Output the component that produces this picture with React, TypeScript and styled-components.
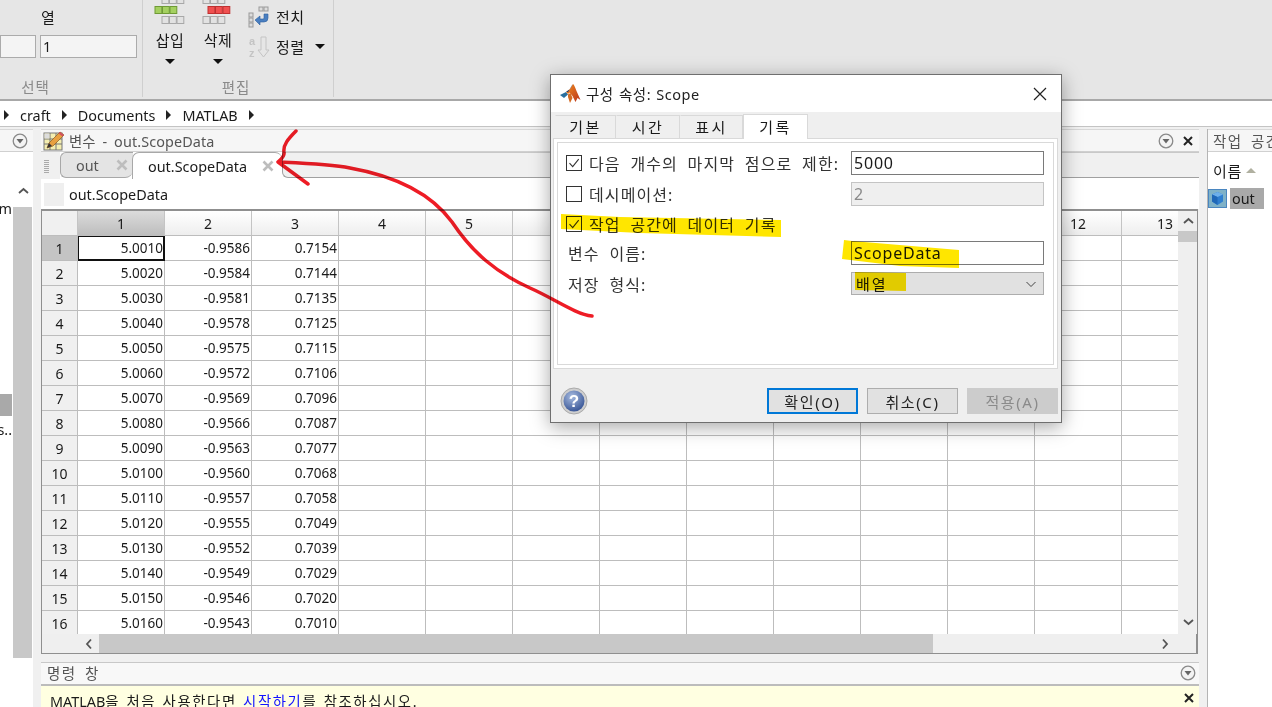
import React from 'react'
import styled, { createGlobalStyle } from 'styled-components'

const FONT = `"Noto Sans", "Noto Sans CJK KR", sans-serif`

const GlobalStyle = createGlobalStyle`
  html, body {
    margin: 0;
    padding: 0;
    background: #f0f0f0;
    font-family: ${FONT};
    font-size: 14.4px;
    color: #1a1a1a;
  }
  * { box-sizing: border-box; }
`

const Page = styled.div`
  position: relative;
  width: 1272px;
  height: 707px;
  overflow: hidden;
  display: flex;
  flex-direction: column;
  background: #f0f0f0;
`

/* ribbon */
const Ribbon = styled.div`
  height: 101px;
  flex: none;
  display: flex;
  background: #e6e6e6;
  border-bottom: 2px solid #a8a8a8;
`
const RibbonSection = styled.div<{ $w: number }>`
  width: ${p => p.$w}px;
  height: 97px;
  flex: none;
  display: flex;
  flex-direction: column;
  border-right: 1px solid #cfcfcf;
`
const SectionBody = styled.div<{ $pad?: number }>`
  flex: 1;
  display: flex;
  min-height: 0;
  padding-left: ${p => p.$pad ?? 0}px;
`
const SectionLabel = styled.div<{ $right: number }>`
  height: 20px;
  padding-right: ${p => p.$right}px;
  text-align: center;
  color: #8a8a8a;
  font-size: 14.5px;
  letter-spacing: 1px;
  line-height: 20px;
`
const SelectBody = styled.div`
  display: flex;
  flex-direction: column;
`
const ColTitle = styled.div`
  height: 35px;
  padding: 7px 0 0 41px;
  line-height: 20px;
  font-size: 15px;
`
const InputRow = styled.div`
  display: flex;
  gap: 4px;
`
const RibbonInput = styled.div<{ $w: number }>`
  width: ${p => p.$w}px;
  height: 23px;
  background: #f4f4f4;
  border: 1px solid #ababab;
  padding-left: 2px;
  font-size: 14.4px;
  line-height: 21px;
`
const BigButton = styled.div`
  width: 48px;
  display: flex;
  flex-direction: column;
  align-items: center;
`
const BigIcon = styled.div`
  height: 30px;
  align-self: stretch;
`
const BigLabel = styled.div`
  font-size: 15px;
  line-height: 20px;
  letter-spacing: 0.5px;
`
const Caret = styled.span<{ $top?: number; $left?: number }>`
  display: inline-block;
  width: 0;
  height: 0;
  margin-top: ${p => p.$top ?? 0}px;
  margin-left: ${p => p.$left ?? 0}px;
  border-left: 5px solid transparent;
  border-right: 5px solid transparent;
  border-top: 5px solid #111;
`
const SmallCol = styled.div`
  padding: 5px 0 0 6px;
  display: flex;
  flex-direction: column;
  gap: 7px;
`
const SmallRow = styled.div`
  display: flex;
  align-items: center;
  gap: 4px;
  height: 23px;
  font-size: 15px;
  letter-spacing: 0.5px;
`

/* address bar */
const AddressBar = styled.div`
  height: 25px;
  flex: none;
  display: flex;
  align-items: center;
  gap: 11px;
  padding: 3px 0 0 4px;
  background: #fff;
  font-size: 14.4px;
`
const Crumb = styled.span`
  width: 0;
  height: 0;
  border-top: 5px solid transparent;
  border-bottom: 5px solid transparent;
  border-left: 5px solid #222;
`

/* desktop */
const Desktop = styled.div`
  flex: 1;
  min-height: 0;
  display: flex;
  padding-top: 2px;
  border-top: 1px solid #c4c4c4;
`
const LeftPanel = styled.div`
  width: 33px;
  flex: none;
  display: flex;
  flex-direction: column;
`
const PanelHead = styled.div`
  height: 23px;
  flex: none;
  display: flex;
  align-items: center;
  background: #f6f6f6;
  border-top: 1px solid #d8d8d8;
  border-bottom: 1px solid #d0d0d0;
`
const LeftHead = styled(PanelHead)`
  justify-content: flex-end;
  padding-right: 5px;
`
const LeftBody = styled.div`
  flex: 1;
  min-height: 0;
  display: flex;
  background: #fff;
`
const LeftFiles = styled.div`
  position: relative;
  width: 13px;
  flex: none;
  overflow: hidden;
  font-size: 14.4px;
`
const LeftText = styled.div<{ $top: number }>`
  position: absolute;
  right: 1px;
  top: ${p => p.$top}px;
  line-height: 18px;
  white-space: nowrap;
`
const LeftSelected = styled.div`
  position: absolute;
  left: 0;
  right: 1px;
  top: 242px;
  height: 22px;
  background: #a9a9a9;
`
const LeftScroll = styled.div`
  width: 19px;
  flex: none;
  display: flex;
  flex-direction: column;
`
const ScrollBtn = styled.div`
  height: 55px;
  flex: none;
  display: flex;
  align-items: flex-end;
  justify-content: center;
  padding-bottom: 10px;
`
const ScrollThumb = styled.div`
  height: 451px;
  flex: none;
  background: #c8c8c8;
`

const Center = styled.div`
  width: 1158px;
  margin-left: 8px;
  flex: none;
  display: flex;
  flex-direction: column;
  gap: 8px;
`
const VarPanel = styled.div`
  height: 525px;
  flex: none;
  display: flex;
  flex-direction: column;
  overflow: hidden;
`
const VarHead = styled(PanelHead)`
  padding: 0 0 0 2px;
  color: #555;
  font-size: 14.4px;
`
const VarTitle = styled.span`
  margin-left: 4px;
  word-spacing: 3px;
  letter-spacing: 0.1px;
`
const Spacer = styled.div`
  flex: 1;
`
const HeadTool = styled.div`
  width: 22px;
  display: flex;
  align-items: center;
  justify-content: center;
`
const TabBar = styled.div`
  height: 27px;
  flex: none;
  display: flex;
  background: #fff;
`
const GripArea = styled.div`
  width: 19px;
  flex: none;
  display: flex;
  align-items: center;
  padding-left: 3px;
  background: #f0f0f0;
`
const Gripper = styled.div`
  width: 5px;
  height: 14px;
  background: repeating-linear-gradient(0deg, #aaa 0 1px, transparent 1px 2px);
`
const OutTab = styled.div`
  width: 73px;
  height: 26px;
  flex: none;
  display: flex;
  align-items: center;
  justify-content: space-between;
  padding: 0 5px 0 15px;
  color: #555;
  background: #e4e4e4;
  border: 1px solid #a8a8a8;
  border-right: none;
  border-radius: 6px 0 8px 6px;
  font-size: 14.4px;
`
const ActiveTab = styled.div`
  width: 150px;
  flex: none;
  display: flex;
  align-items: center;
  justify-content: space-between;
  padding: 0 8px 0 15px;
  background: #fff;
  border-top: 1px solid #a8a8a8;
  border-left: 1px solid #a8a8a8;
  border-radius: 7px 7px 0 0;
  font-size: 14.4px;
  margin-left: -1px;
`
const TabRest = styled.div`
  flex: 1;
  height: 26px;
  background: #f0f0f0;
  border-top: 1px solid #c8c8c8;
  border-left: 1px solid #a0a0a0;
  border-bottom: 1px solid #a0a0a0;
  border-radius: 0 0 0 6px;
`
const NameBar = styled.div`
  height: 30px;
  flex: none;
  display: flex;
  align-items: center;
  gap: 5px;
  padding: 1px 0 0 3px;
  background: #fff;
  font-size: 14.4px;
`
const NameIcon = styled.div`
  width: 20px;
  height: 23px;
  background: #efefef;
`
const GridFrame = styled.div`
  flex: 1;
  min-height: 0;
  display: flex;
  flex-direction: column;
  border: 2px solid #8f8f8f;
  border-bottom-width: 1px;
  border-left-width: 1px;
  margin-right: 1px;
  background: #efefef;
`
const GridArea = styled.div`
  height: 423px;
  flex: none;
  display: flex;
`
const Sheet = styled.div`
  width: 1136px;
  flex: none;
  overflow: hidden;
  display: grid;
  grid-template-columns: 36px repeat(13, 87px);
  grid-auto-rows: 25px;
  background: #fff;
`
const ColHead = styled.div<{ $selected?: boolean }>`
  display: flex;
  align-items: center;
  justify-content: center;
  font-size: 14px;
  background: ${p => (p.$selected ? 'linear-gradient(#dcdcdc, #bdbdbd)' : 'linear-gradient(#fff, #eeeeee)')};
  border-right: 1px solid #c4c4c4;
  border-bottom: 1px solid #bdbdbd;
`
const Corner = styled.div`
  background: #f0f0f0;
  border-right: 1px solid #c4c4c4;
  border-bottom: 1px solid #bdbdbd;
`
const RowHead = styled.div<{ $selected?: boolean }>`
  display: flex;
  align-items: center;
  justify-content: center;
  font-size: 14px;
  background: ${p => (p.$selected ? '#c4c4c4' : '#f0f0f0')};
  border-right: 1px solid #bdbdbd;
  border-bottom: 1px solid #bdbdbd;
`
const Cell = styled.div<{ $focus?: boolean }>`
  display: flex;
  align-items: center;
  justify-content: flex-end;
  padding-right: 1px;
  font-size: 13.5px;
  border-right: 1px solid #bdbdbd;
  border-bottom: 1px solid #bdbdbd;
  ${p => (p.$focus ? 'box-shadow: inset 0 0 0 1px #111; border-color: #111;' : '')}
`
const VScroll = styled.div`
  width: 19px;
  flex: none;
  display: flex;
  flex-direction: column;
  background: #efefef;
`
const VBtn = styled.div<{ $h: number }>`
  height: ${p => p.$h}px;
  flex: none;
  display: flex;
  align-items: center;
  justify-content: center;
`
const VThumb = styled.div`
  height: 11px;
  flex: none;
  background: #c8c8c8;
`
const HScroll = styled.div`
  flex: 1;
  display: flex;
  align-items: stretch;
  background: #efefef;
  padding-left: 36px;
`
const HBtn = styled.div`
  width: 21px;
  flex: none;
  display: flex;
  align-items: center;
  justify-content: center;
`
const HThumb = styled.div`
  width: 834px;
  flex: none;
  background: #c8c8c8;
`
const HEnd = styled(HBtn)`
  margin-left: auto;
  margin-right: 21px;
`

const CommandWindow = styled.div`
  flex: 1;
  display: flex;
  flex-direction: column;
`
const CommandHead = styled.div`
  height: 24px;
  flex: none;
  display: flex;
  align-items: center;
  padding: 0 0 2px 6px;
  background: #f8f8f8;
  border-top: 1px solid #c8c8c8;
  border-bottom: 2px solid #bcbcbc;
  color: #555;
  font-size: 14.5px;
  letter-spacing: 1.5px;
  word-spacing: 3px;
`
const Notice = styled.div`
  flex: 1;
  display: flex;
  align-items: flex-start;
  justify-content: space-between;
  padding: 4px 0 0 9px;
  background: #ffffe1;
  font-size: 14.4px;
  letter-spacing: 1.6px;
  word-spacing: 1px;
  white-space: nowrap;
`
const ProductName = styled.span`
  letter-spacing: 0;
`
const NoticeLink = styled.span`
  color: #1414ff;
`
const NoticeClose = styled(HeadTool)`
  margin-top: 2px;
  margin-right: -1px;
`

const RightPanel = styled.div`
  width: 65px;
  margin-left: 8px;
  flex: none;
  display: flex;
  flex-direction: column;
  border-left: 1px solid #b4b4b4;
`
const RightHead = styled(PanelHead)`
  padding-left: 5px;
  color: #555;
  white-space: nowrap;
  overflow: hidden;
  font-size: 14.5px;
  letter-spacing: 1.5px;
  word-spacing: 3px;
`
const RightBody = styled.div`
  flex: 1;
  background: #fff;
`
const NameHeader = styled.div`
  height: 35px;
  display: flex;
  align-items: center;
  gap: 4px;
  padding: 2px 0 0 5px;
  font-size: 15px;
  letter-spacing: 0.6px;
`
const UpArrow = styled.span`
  width: 0;
  height: 0;
  border-left: 5px solid transparent;
  border-right: 5px solid transparent;
  border-bottom: 5px solid #b0b0a0;
`
const VarRow = styled.div`
  height: 22px;
  display: flex;
  align-items: center;
  gap: 3px;
`
const VarName = styled.span`
  width: 34px;
  height: 21px;
  padding-left: 2px;
  line-height: 21px;
  background: #a9a9a9;
  font-size: 14.4px;
`

/* dialog */
const Dialog = styled.div`
  position: absolute;
  left: 550px;
  top: 74px;
  width: 512px;
  height: 349px;
  display: flex;
  flex-direction: column;
  background: #efefef;
  border: 1px solid #6f6f6f;
  box-shadow: 0 4px 18px rgba(0, 0, 0, 0.35);
  z-index: 5;
`
const TitleBar = styled.div`
  height: 37px;
  flex: none;
  display: flex;
  align-items: center;
  justify-content: space-between;
  padding: 0 14px 0 9px;
  background: #fff;
`
const TitleText = styled.div`
  display: flex;
  align-items: center;
  gap: 5px;
  font-size: 14.5px;
  color: #222;
  letter-spacing: 0.5px;
  word-spacing: 1px;
`
const DialogTabs = styled.div`
  height: 26px;
  flex: none;
  display: flex;
  align-items: flex-end;
  padding: 3px 0 0 4px;
`
const DialogTab = styled.div<{ $active?: boolean; $w: number }>`
  width: ${p => p.$w}px;
  height: ${p => (p.$active ? 25 : 23)}px;
  margin-bottom: ${p => (p.$active ? -1 : 0)}px;
  flex: none;
  display: flex;
  align-items: center;
  justify-content: center;
  padding-bottom: 2px;
  font-size: 15px;
  letter-spacing: 2.5px;
  background: ${p => (p.$active ? '#fff' : '#efefef')};
  border: 1px solid #d9d9d9;
  border-bottom: none;
  border-left-color: ${p => (p.$active ? '#d9d9d9' : 'transparent')};
  position: relative;
  z-index: ${p => (p.$active ? 1 : 0)};
`
const TabPane = styled.div`
  height: 231px;
  margin: 0 3px 0 2px;
  flex: none;
  padding: 3px;
  background: #fff;
  border: 1px solid #d9d9d9;
`
const TabInner = styled.div`
  height: 100%;
  display: grid;
  grid-template-columns: 1fr 193px;
  grid-template-rows: 31px 31px 29px 29px 33px;
  align-content: start;
  padding: 4px 9px 0 8px;
  border: 1px solid #d9d9d9;
`
const FieldLabel = styled.div`
  display: flex;
  align-items: center;
  gap: 7px;
  font-size: 16px;
  letter-spacing: 1.1px;
  word-spacing: 4.5px;
  color: #333;
  white-space: nowrap;
`
const PlainLabel = styled(FieldLabel)`
  padding-left: 2px;
`
const WideLabel = styled(FieldLabel)`
  grid-column: 1 / -1;
`
const Check = styled.span`
  width: 16px;
  height: 16px;
  flex: none;
  display: flex;
  align-items: center;
  justify-content: center;
  background: #fff;
  border: 1px solid #333;
`
const FieldBox = styled.div<{ $disabled?: boolean }>`
  height: 24px;
  align-self: center;
  padding-left: 2px;
  font-size: 16px;
  line-height: 22px;
  letter-spacing: 0.8px;
  color: ${p => (p.$disabled ? '#8a8a8a' : '#1a1a1a')};
  background: ${p => (p.$disabled ? '#efefef' : '#fff')};
  border: 1px solid ${p => (p.$disabled ? '#c4c4c4' : '#7a7a7a')};
`
const Combo = styled.div`
  height: 23px;
  align-self: center;
  display: flex;
  align-items: center;
  justify-content: space-between;
  padding: 0 6px 0 4px;
  font-size: 15px;
  letter-spacing: 2px;
  background: #e1e1e1;
  border: 1px solid #adadad;
`
const ButtonRow = styled.div`
  flex: 1;
  display: flex;
  align-items: center;
  gap: 9px;
  padding: 11px 3px 0 9px;
`
const DlgButton = styled.div<{ $kind?: 'primary' | 'off' }>`
  width: 91px;
  height: 26px;
  display: flex;
  align-items: center;
  justify-content: center;
  font-size: 15px;
  letter-spacing: 1.6px;
  color: ${p => (p.$kind === 'off' ? '#8a8a8a' : '#222')};
  background: ${p => (p.$kind === 'off' ? '#cccccc' : '#e1e1e1')};
  border: ${p =>
    p.$kind === 'primary' ? '2px solid #0078d7' : p.$kind === 'off' ? '1px solid #cccccc' : '1px solid #adadad'};
`

const Annotations = styled.svg`
  position: absolute;
  left: 0;
  top: 0;
  width: 1272px;
  height: 707px;
  pointer-events: none;
  z-index: 6;
  mix-blend-mode: multiply;
`

const rows: [string, string, string][] = [
  ['5.0010', '-0.9586', '0.7154'],
  ['5.0020', '-0.9584', '0.7144'],
  ['5.0030', '-0.9581', '0.7135'],
  ['5.0040', '-0.9578', '0.7125'],
  ['5.0050', '-0.9575', '0.7115'],
  ['5.0060', '-0.9572', '0.7106'],
  ['5.0070', '-0.9569', '0.7096'],
  ['5.0080', '-0.9566', '0.7087'],
  ['5.0090', '-0.9563', '0.7077'],
  ['5.0100', '-0.9560', '0.7068'],
  ['5.0110', '-0.9557', '0.7058'],
  ['5.0120', '-0.9555', '0.7049'],
  ['5.0130', '-0.9552', '0.7039'],
  ['5.0140', '-0.9549', '0.7029'],
  ['5.0150', '-0.9546', '0.7020'],
  ['5.0160', '-0.9543', '0.7010'],
]
const columns = Array.from({ length: 13 }, (_, i) => i + 1)

const MenuCircle = () => (
  <svg width="16" height="16" viewBox="0 0 16 16">
    <circle cx="8" cy="8" r="6.8" fill="#f4f4f4" stroke="#8a8a8a" strokeWidth="1.3" />
    <path d="M4.5 6h7L8 10.5z" fill="#666" />
  </svg>
)
const CloseBold = () => (
  <svg width="12" height="12" viewBox="0 0 12 12">
    <path d="M2 2l8 8M10 2l-8 8" stroke="#222" strokeWidth="2" />
  </svg>
)
const TabClose = () => (
  <svg width="12" height="12" viewBox="0 0 12 12">
    <path d="M1.5 1.5l9 9M10.5 1.5l-9 9" stroke="#bdbdbd" strokeWidth="2.6" />
  </svg>
)
const Chevron = ({ dir }: { dir: 'up' | 'down' | 'left' | 'right' }) => {
  const d = {
    up: 'M2 8l4.5-4 4.5 4',
    down: 'M2 4l4.5 4 4.5-4',
    left: 'M8 1.5l-4 4.5 4 4.5',
    right: 'M4 1.5l4 4.5-4 4.5',
  }[dir]
  return (
    <svg width="12" height="12" viewBox="0 0 12 12">
      <path d={d} fill="none" stroke="#555" strokeWidth="1.8" />
    </svg>
  )
}
const CheckMark = () => (
  <svg width="12" height="12" viewBox="0 0 12 12">
    <path d="M1.5 6.2l3.2 3.4 6-7.4" fill="none" stroke="#333" strokeWidth="1.1" />
  </svg>
)

const cellRow = (y: number, x: number, fill: string, stroke: string) =>
  [0, 1, 2].map(i => <rect key={i} x={x + i * 7.5} y={y} width="6.8" height="7" fill={fill} stroke={stroke} strokeWidth="1" />)

const EditIcon = ({ mid, edge, midX, grayX }: { mid: string; edge: string; midX: number; grayX: number }) => (
  <svg width="48" height="30" viewBox="0 0 48 30">
    {cellRow(-3.5, grayX, '#e2e2e2', '#a8a8a8')}
    {cellRow(6.5, midX, mid, edge)}
    {cellRow(16.5, grayX, '#e2e2e2', '#a8a8a8')}
  </svg>
)
const TransposeIcon = () => (
  <svg width="24" height="22" viewBox="0 0 24 22">
    <rect x="1" y="7" width="4" height="4" fill="#ddd" stroke="#999" />
    <rect x="1" y="12" width="4" height="4" fill="#ddd" stroke="#999" />
    <rect x="1" y="17" width="4" height="4" fill="#ddd" stroke="#999" />
    <rect x="11" y="1" width="4" height="4" fill="#ddd" stroke="#999" />
    <rect x="16" y="1" width="4" height="4" fill="#ddd" stroke="#999" />
    <path d="M20 8v4a4 4 0 0 1-4 4h-4v3l-5-5 5-4v3h3a1 1 0 0 0 1-1V8z" fill="#4a7fc0" stroke="#2e5f9e" strokeWidth=".6" />
  </svg>
)
const SortIcon = () => (
  <svg width="24" height="24" viewBox="0 0 24 24">
    <text x="1" y="10" fontSize="11" fontWeight="700" fill="#c4c4c4" fontFamily="Liberation Sans">a</text>
    <text x="1" y="22" fontSize="11" fontWeight="700" fill="#c4c4c4" fontFamily="Liberation Sans">z</text>
    <path d="M13 2h5v13h3l-5.5 7L10 15h3z" fill="#e6e6e6" stroke="#c4c4c4" />
  </svg>
)
const VariableIcon = () => (
  <svg width="22" height="20" viewBox="0 0 22 20">
    <rect x="1" y="2" width="18" height="17" fill="#f4eeb0" stroke="#777" />
    <path d="M1 8h18M1 13h18M7 2v17M13 2v17" stroke="#777" />
    <rect x="1.5" y="2.5" width="5" height="5" fill="#ddd" />
    <path d="M4 17l2-5L17 1l4 3L10 15z" fill="#e8a040" stroke="#8a5a20" strokeWidth=".7" />
    <path d="M17 1l4 3-1.5 1.5-4-3z" fill="#d05060" />
    <path d="M4 17l2-5 3 3z" fill="#333" />
  </svg>
)
const CubeIcon = () => (
  <svg width="19" height="19" viewBox="0 0 19 19">
    <rect x=".5" y=".5" width="18" height="18" fill="#7fb2c8" stroke="#4a86c0" />
    <path d="M9.5 3l5.5 2.5v7L9.5 16 4 12.5v-7z" fill="#2f7fd0" />
    <path d="M9.5 3l5.5 2.5-5.5 2.6L4 5.5z" fill="#6eb0ea" />
    <path d="M9.5 8v8L4 12.5v-7z" fill="#1f68b8" />
  </svg>
)
const MatlabLogo = () => (
  <svg width="21" height="20" viewBox="0 0 21 20">
    <defs>
      <linearGradient id="peak" x1="0" y1="0" x2="1" y2="1">
        <stop offset="0" stopColor="#f08a20" />
        <stop offset="1" stopColor="#b8321a" />
      </linearGradient>
    </defs>
    <path d="M0 11l6-3 2 2.5L4 14z" fill="#2a6f9e" />
    <path d="M6 8l4-3 3-5c1 .5 2 3 3.5 7l4 9-3-2-2 4-3-6-3-3.5-1.5 1.5z" fill="url(#peak)" />
    <path d="M13 0c-2 2-3 5-5 8l-2 0 4-3z" fill="#1f3f6e" />
    <path d="M8 10.5l2.5-1.5 2 5-2.5 5-2-6z" fill="#d46a20" />
  </svg>
)
const HelpIcon = () => (
  <svg width="28" height="28" viewBox="0 0 28 28">
    <defs>
      <radialGradient id="help" cx=".4" cy=".3" r=".8">
        <stop offset="0" stopColor="#a8bce0" />
        <stop offset="1" stopColor="#2c4a8e" />
      </radialGradient>
    </defs>
    <circle cx="14" cy="14" r="13" fill="#cfcfcf" stroke="#aaa" />
    <circle cx="14" cy="14" r="10.5" fill="url(#help)" />
    <text x="14" y="20" textAnchor="middle" fontSize="17" fontWeight="700" fill="#fff" fontFamily="Liberation Sans">?</text>
  </svg>
)

export default function App() {
  return (
    <Page>
      <GlobalStyle />
      <Ribbon>
        <RibbonSection $w={143}>
          <SectionBody>
            <SelectBody>
              <ColTitle>열</ColTitle>
              <InputRow>
                <RibbonInput $w={36} />
                <RibbonInput $w={97}>1</RibbonInput>
              </InputRow>
            </SelectBody>
          </SectionBody>
          <SectionLabel $right={71}>선택</SectionLabel>
        </RibbonSection>
        <RibbonSection $w={191}>
          <SectionBody $pad={3}>
            <BigButton>
              <BigIcon>
                <EditIcon mid="#a4d060" edge="#6f9a35" midX={9} grayX={16} />
              </BigIcon>
              <BigLabel>삽입</BigLabel>
              <Caret $top={9} />
            </BigButton>
            <BigButton>
              <BigIcon>
                <EditIcon mid="#f05050" edge="#c03030" midX={14} grayX={9} />
              </BigIcon>
              <BigLabel>삭제</BigLabel>
              <Caret $top={9} />
            </BigButton>
            <SmallCol>
              <SmallRow>
                <TransposeIcon />
                전치
              </SmallRow>
              <SmallRow>
                <SortIcon />
                정렬
                <Caret $left={6} />
              </SmallRow>
            </SmallCol>
          </SectionBody>
          <SectionLabel $right={4}>편집</SectionLabel>
        </RibbonSection>
      </Ribbon>

      <AddressBar>
        <Crumb />
        craft
        <Crumb />
        Documents
        <Crumb />
        MATLAB
        <Crumb />
      </AddressBar>

      <Desktop>
        <LeftPanel>
          <LeftHead>
            <MenuCircle />
          </LeftHead>
          <LeftBody>
            <LeftFiles>
              <LeftText $top={48}>m</LeftText>
              <LeftSelected />
              <LeftText $top={269}>s..</LeftText>
            </LeftFiles>
            <LeftScroll>
              <ScrollBtn>
                <Chevron dir="up" />
              </ScrollBtn>
              <ScrollThumb />
            </LeftScroll>
          </LeftBody>
        </LeftPanel>

        <Center>
          <VarPanel>
            <VarHead>
              <VariableIcon />
              <VarTitle>변수 - out.ScopeData</VarTitle>
              <Spacer />
              <HeadTool>
                <MenuCircle />
              </HeadTool>
              <HeadTool>
                <CloseBold />
              </HeadTool>
            </VarHead>
            <TabBar>
              <GripArea>
                <Gripper />
              </GripArea>
              <OutTab>
                out
                <TabClose />
              </OutTab>
              <ActiveTab>
                out.ScopeData
                <TabClose />
              </ActiveTab>
              <TabRest />
            </TabBar>
            <NameBar>
              <NameIcon />
              out.ScopeData
            </NameBar>
            <GridFrame>
              <GridArea>
                <Sheet>
                  <Corner />
                  {columns.map(c => (
                    <ColHead key={c} $selected={c === 1}>
                      {c}
                    </ColHead>
                  ))}
                  {rows.map((row, r) => (
                    <React.Fragment key={row[0]}>
                      <RowHead $selected={r === 0}>{r + 1}</RowHead>
                      {columns.map(c => (
                        <Cell key={c} $focus={r === 0 && c === 1}>
                          {row[c - 1] ?? ''}
                        </Cell>
                      ))}
                    </React.Fragment>
                  ))}
                </Sheet>
                <VScroll>
                  <VBtn $h={20}>
                    <Chevron dir="up" />
                  </VBtn>
                  <VThumb />
                  <Spacer />
                  <VBtn $h={24}>
                    <Chevron dir="down" />
                  </VBtn>
                </VScroll>
              </GridArea>
              <HScroll>
                <HBtn>
                  <Chevron dir="left" />
                </HBtn>
                <HThumb />
                <HEnd>
                  <Chevron dir="right" />
                </HEnd>
              </HScroll>
            </GridFrame>
          </VarPanel>

          <CommandWindow>
            <CommandHead>
              명령 창
              <Spacer />
              <HeadTool>
                <MenuCircle />
              </HeadTool>
            </CommandHead>
            <Notice>
              <span>
                <ProductName>MATLAB</ProductName>을 처음 사용한다면 <NoticeLink>시작하기</NoticeLink>를 참조하십시오.
              </span>
              <NoticeClose>
                <CloseBold />
              </NoticeClose>
            </Notice>
          </CommandWindow>
        </Center>

        <RightPanel>
          <RightHead>작업 공간</RightHead>
          <RightBody>
            <NameHeader>
              이름
              <UpArrow />
            </NameHeader>
            <VarRow>
              <CubeIcon />
              <VarName>out</VarName>
            </VarRow>
          </RightBody>
        </RightPanel>
      </Desktop>

      <Dialog>
        <TitleBar>
          <TitleText>
            <MatlabLogo />
            구성 속성: Scope
          </TitleText>
          <svg width="14" height="14" viewBox="0 0 14 14">
            <path d="M1 1l12 12M13 1L1 13" stroke="#222" strokeWidth="1.2" />
          </svg>
        </TitleBar>
        <DialogTabs>
          <DialogTab $w={61}>기본</DialogTab>
          <DialogTab $w={64}>시간</DialogTab>
          <DialogTab $w={63}>표시</DialogTab>
          <DialogTab $active $w={65}>
            기록
          </DialogTab>
        </DialogTabs>
        <TabPane>
          <TabInner>
            <FieldLabel>
              <Check>
                <CheckMark />
              </Check>
              다음 개수의 마지막 점으로 제한:
            </FieldLabel>
            <FieldBox>5000</FieldBox>
            <FieldLabel>
              <Check />
              데시메이션:
            </FieldLabel>
            <FieldBox $disabled>2</FieldBox>
            <WideLabel>
              <Check>
                <CheckMark />
              </Check>
              작업 공간에 데이터 기록
            </WideLabel>
            <PlainLabel>변수 이름:</PlainLabel>
            <FieldBox>ScopeData</FieldBox>
            <PlainLabel>저장 형식:</PlainLabel>
            <Combo>
              배열
              <svg width="12" height="12" viewBox="0 0 12 12">
                <path d="M1.5 4l4.5 4.5L10.5 4" fill="none" stroke="#444" strokeWidth="1" />
              </svg>
            </Combo>
          </TabInner>
        </TabPane>
        <ButtonRow>
          <HelpIcon />
          <Spacer />
          <DlgButton $kind="primary">확인(O)</DlgButton>
          <DlgButton>취소(C)</DlgButton>
          <DlgButton $kind="off">적용(A)</DlgButton>
        </ButtonRow>
      </Dialog>

      <Annotations viewBox="0 0 1272 707">
        <path d="M561 214L620 217L781 220L781 237L640 233L561 229z" fill="#ffe600" />
        <path d="M844 240L852 241L959 250L959 268L900 266L842 259z" fill="#ffe600" />
        <path d="M855 272L906 273L906 291L855 290z" fill="#ffe600" />
        <path
          d="M296 131C288 139 283 145 284 152C285 157 280 160 278 162L308 184M278 162C300 163 330 164 350 168C395 176 430 192 452 222C472 252 495 272 530 288C555 299 575 314 592 316"
          fill="none"
          stroke="#ee1c25"
          strokeWidth="3.5"
          strokeLinecap="round"
          strokeLinejoin="round"
        />
      </Annotations>
    </Page>
  )
}
